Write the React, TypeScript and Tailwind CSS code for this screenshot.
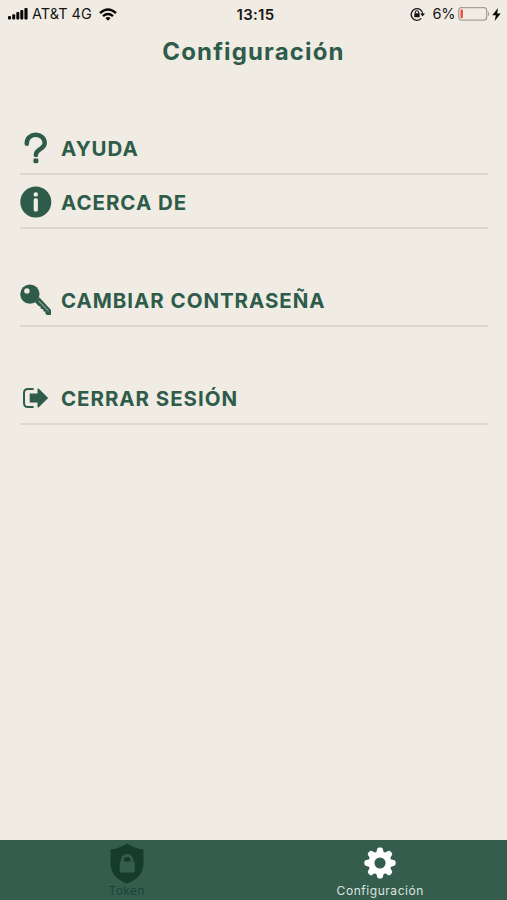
import type { ReactNode } from 'react';

const QuestionIcon = () => (
    <svg viewBox="0 0 32 32" className="size-8 shrink-0" fill="none">
        <path d="M6.8 11.7V11.2C6.8 6 10.6 2.8 15.7 2.8C20.9 2.8 24.7 6.2 24.7 11C24.7 17.6 15.9 16.7 15.9 22.8V23" stroke="#2f5c4a" strokeWidth="4.5" strokeLinecap="round" />
        <rect x="13.4" y="26.6" width="5" height="4.6" rx="1.4" fill="#2f5c4a" />
    </svg>
);

const InfoIcon = () => (
    <svg viewBox="0 0 32 32" className="size-8 shrink-0">
        <circle cx="15.8" cy="16" r="15.5" fill="#2f5c4a" />
        <circle cx="15.8" cy="8.4" r="2.2" fill="#f0ece4" />
        <rect x="13.7" y="12.2" width="4.2" height="13.4" rx="1.7" fill="#f0ece4" />
    </svg>
);

const KeyIcon = () => (
    <svg viewBox="0 0 32 32" className="size-8 shrink-0">
        <path d="M15.5 17L19.5 13.5L31 26V30.2L30.2 31H27L25.2 29.2L25.6 27.8L23.4 27.3L23.2 25.2L20.8 24.8L20.4 22.4L18.6 22L14 17Z" fill="#2f5c4a" />
        <circle cx="9.9" cy="10.1" r="9.7" fill="#2f5c4a" />
        <circle cx="6.9" cy="6.9" r="2.7" fill="#f0ece4" />
        <path d="M18.8 17L28.6 27.2" stroke="#b9c4b9" strokeWidth="1" />
    </svg>
);

const LogoutIcon = () => (
    <svg viewBox="0 0 32 32" className="size-8 shrink-0">
        <path d="M13.6 7H8.2C5.6 7 4 8.6 4 11.1V20.9C4 23.4 5.6 25 8.2 25H13.6" fill="none" stroke="#2f5c4a" strokeWidth="2" />
        <path d="M9.7 11.5H17.5V7.4Q17.6 6 18.8 6.8L28.2 16L18.8 25.2Q17.6 26 17.5 24.6V20.5H9.7Z" fill="#2f5c4a" />
    </svg>
);

const ShieldIcon = () => (
    <svg viewBox="0 0 36 42" className="h-[42px] w-9">
        <path d="M18 .6C12.8 4.2 7.6 5.9 1.5 6.4V20C1.5 30.6 8 37 18 40.6C28 37 34.5 30.6 34.5 20V6.4C28.4 5.9 23.2 4.2 18 .6Z" fill="#153b2b" />
        <path d="M13.4 20V16.8C13.4 11 22.8 11 22.8 16.8V20" fill="none" stroke="#355d4e" strokeWidth="2.9" />
        <rect x="10.7" y="18.4" width="15" height="11.2" rx="1" fill="#355d4e" />
    </svg>
);

const teeth = [0, 45, 90, 135, 180, 225, 270, 315];

const GearIcon = () => (
    <svg viewBox="0 0 32 32" className="size-8">
        {teeth.map((angle) => (
            <path key={angle} d="M10.8 6.6Q12.9 5.3 13.1 2.4Q13.2 .4 15 .4H17Q18.8 .4 18.9 2.4Q19.1 5.3 21.2 6.6Z" fill="#fff" transform={`rotate(${angle} 16 16)`} />
        ))}
        <circle cx="16" cy="16" r="8.4" fill="none" stroke="#fff" strokeWidth="5.6" />
    </svg>
);

const StatusBar = () => (
    <div className="grid h-7 grid-cols-3 items-center pl-2 pr-[6px] text-[14.5px] leading-none text-[#171615]">
        <div className="flex items-center">
            <svg viewBox="0 0 20 12" className="mr-1 h-3 w-5" fill="#090909">
                <rect x="0" y="8" width="3" height="3.6" rx="1" />
                <rect x="4.2" y="6.2" width="3" height="5.4" rx="1" />
                <rect x="8.3" y="4" width="3" height="7.6" rx="1" />
                <rect x="12.3" y="2" width="3" height="9.6" rx="1" />
                <rect x="16.4" y="0" width="3.2" height="11.6" rx="1" />
            </svg>
            <span className="whitespace-nowrap">AT&amp;T 4G</span>
            <svg viewBox="0 0 18 13" className="ml-[7px] h-[13px] w-[18px]" fill="none" stroke="#090909" strokeWidth="2.4">
                <path d="M1 5Q9 -2 17 5" />
                <path d="M4 8.1Q9 3.8 14 8.1" />
                <path d="M6.4 10Q9 7.8 11.6 10L9 12.8Z" fill="#090909" stroke="none" />
            </svg>
        </div>
        <span className="pl-0.5 text-center text-[15px] font-semibold tracking-[0.3px]">13:15</span>
        <div className="flex items-center justify-end">
            <svg viewBox="0 0 16 14" className="mr-[7px] h-3.5 w-4">
                <path d="M11.3 11.4A5.8 5.8 0 1 1 12.8 7.4" fill="none" stroke="#171615" strokeWidth="1.3" />
                <path d="M10.2 6.5H15L12.6 9.5Z" fill="#171615" />
                <rect x="4.3" y="6.3" width="5.4" height="4" rx=".5" fill="#171615" />
                <path d="M5.4 6.5V5.2Q5.4 3.7 7 3.7T8.6 5.2V6.5" fill="none" stroke="#171615" strokeWidth="1.1" />
            </svg>
            <span className="tracking-[-0.4px]">6%</span>
            <svg viewBox="0 0 34 14" className="ml-[3px] h-3.5 w-[34px]">
                <rect x=".7" y=".5" width="28" height="12.6" rx="3" fill="none" stroke="#a4a19b" strokeWidth="1.3" />
                <rect x="2.5" y="2.4" width="2.4" height="8.8" rx="1" fill="#f04a3f" />
                <path d="M30 4.4Q32.6 6.8 30 9.2Z" fill="#a4a19b" />
            </svg>
            <svg viewBox="0 0 9 13" className="h-[13px] w-[9px]" fill="#090909">
                <path d="M6 0L.3 7.2H3.8L2.7 13L8.7 5.4H5.2Z" />
            </svg>
        </div>
    </div>
);

interface MenuRowProps {
    icon: ReactNode;
    label: string;
    className?: string;
}

const MenuRow = ({ icon, label, className = '' }: MenuRowProps) => (
    <button className={`flex w-full items-center gap-[9px] border-b-2 border-[#dad7d0] text-left tracking-[0.95px] ${className}`}>
        {icon}
        <span className="whitespace-nowrap pt-0.5 text-[20.5px] font-bold leading-7">{label}</span>
    </button>
);

export default function App() {
    return (
        <div className="flex h-[900px] w-[507px] flex-col overflow-hidden bg-[#f0ece4] font-['Inter',sans-serif] text-[#2f5c4a]">
            <StatusBar />
            <h1 className="h-12 text-center text-2xl font-bold leading-[47px] tracking-[1.15px]">Configuración</h1>

            <main className="flex flex-1 flex-col pl-5 pr-[19px] pt-[46px]">
                <MenuRow icon={<QuestionIcon />} label="AYUDA" className="h-[53px] pt-px" />
                <MenuRow icon={<InfoIcon />} label="ACERCA DE" className="h-[54px] pt-px" />
                <MenuRow icon={<KeyIcon />} label="CAMBIAR CONTRASEÑA" className="mt-11 h-[54px] pt-px" />
                <MenuRow icon={<LogoutIcon />} label="CERRAR SESIÓN" className="mt-11 h-[54px] pt-px" />
            </main>

            <nav className="grid h-[60px] grid-cols-2 bg-[#355d4e] text-xs leading-none">
                <button className="flex flex-col items-center pt-[3px] text-[#1d4334]">
                    <ShieldIcon />
                    <span className="tracking-[0.4px]">Token</span>
                </button>
                <button className="flex flex-col items-center pt-[7px] text-[#dce4df]">
                    <GearIcon />
                    <span className="mt-1.5 tracking-[0.55px]">Configuración</span>
                </button>
            </nav>
        </div>
    );
}
